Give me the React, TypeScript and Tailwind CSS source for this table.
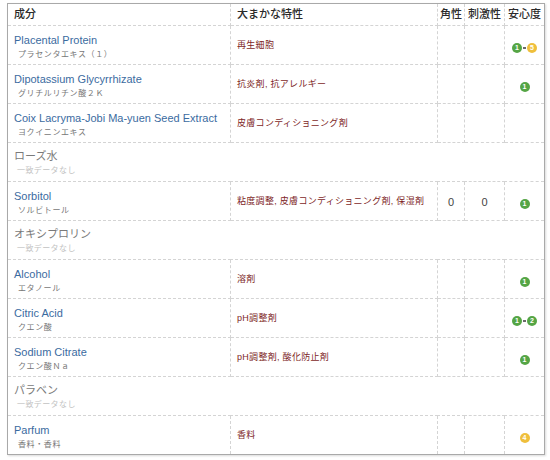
import React from "react";

type Badge = { lo: number; hi?: number };
type Row =
  | { kind: "data"; name: string; sub: string; props: string; k?: string; s?: string; badge?: Badge }
  | { kind: "none"; name: string };

const rows: Row[] = [
  { kind: "data", name: "Placental Protein", sub: "プラセンタエキス（１）", props: "再生細胞", badge: { lo: 1, hi: 5 } },
  { kind: "data", name: "Dipotassium Glycyrrhizate", sub: "グリチルリチン酸２Ｋ", props: "抗炎剤, 抗アレルギー", badge: { lo: 1 } },
  { kind: "data", name: "Coix Lacryma-Jobi Ma-yuen Seed Extract", sub: "ヨクイニンエキス", props: "皮膚コンディショニング剤" },
  { kind: "none", name: "ローズ水" },
  { kind: "data", name: "Sorbitol", sub: "ソルビトール", props: "粘度調整, 皮膚コンディショニング剤, 保湿剤", k: "0", s: "0", badge: { lo: 1 } },
  { kind: "none", name: "オキシプロリン" },
  { kind: "data", name: "Alcohol", sub: "エタノール", props: "溶剤", badge: { lo: 1 } },
  { kind: "data", name: "Citric Acid", sub: "クエン酸", props: "pH調整剤", badge: { lo: 1, hi: 2 } },
  { kind: "data", name: "Sodium Citrate", sub: "クエン酸Ｎａ", props: "pH調整剤, 酸化防止剤", badge: { lo: 1 } },
  { kind: "none", name: "パラベン" },
  { kind: "data", name: "Parfum", sub: "香料・香料", props: "香料", badge: { lo: 4 } },
];

const font = { fontFamily: '"Liberation Sans", Arial, "Noto Sans CJK JP", sans-serif' };

function Dot({ n }: { n: number }) {
  const yellow = n >= 4;
  return (
    <span
      className={
        "inline-flex h-[10px] w-[10px] items-center justify-center rounded-full text-[7px] font-bold leading-none text-white " +
        (yellow ? "bg-[#efbf3c]" : "bg-[#55a545]")
      }
    >
      {n}
    </span>
  );
}

function BadgeView({ b }: { b: Badge }) {
  return (
    <span className="inline-flex items-center">
      <Dot n={b.lo} />
      {b.hi !== undefined && (
        <>
          <span className="mx-[1px] h-[2px] w-[3px] bg-[#6a6a6a]" />
          <Dot n={b.hi} />
        </>
      )}
    </span>
  );
}

const cell = "border border-dashed border-[#d4d4d4]";

export default function App() {
  return (
    <div className="min-h-[460px] w-[550px] bg-white pl-[7px] pt-[3px]" style={font}>
      <table className="w-[537px] table-fixed border-collapse border border-solid border-[#a9a9a9] shadow-[1px_1px_2px_rgba(0,0,0,0.15)]">
        <colgroup>
          <col className="w-[223px]" />
          <col className="w-[207px]" />
          <col className="w-[27px]" />
          <col className="w-[40px]" />
          <col className="w-[40px]" />
        </colgroup>
        <thead>
          <tr className="h-[22px] text-[11px] text-[#2a2a2a]">
            <th className={cell + " border-t-0 border-l-0 px-[6px] text-left font-medium"}>成分</th>
            <th className={cell + " border-t-0 px-[6px] text-left font-medium"}>大まかな特性</th>
            <th className={cell + " border-t-0 px-0 text-center font-medium"}>角性</th>
            <th className={cell + " border-t-0 px-0 text-center font-medium"}>刺激性</th>
            <th className={cell + " border-t-0 border-r-0 px-0 text-center font-medium"}>安心度</th>
          </tr>
        </thead>
        <tbody>
          {rows.map((r, i) =>
            r.kind === "none" ? (
              <tr key={i} className="h-[39px]">
                <td colSpan={5} className={cell + " border-l-0 border-r-0 px-[6px] align-top"}>
                  <div className="pt-[5px] text-[11px] leading-[16px] text-[#7a7a7a]">{r.name}</div>
                  <div className="pl-[3px] text-[8px] leading-[13px] tracking-[0.4px] text-[#c2c2c2]">一致データなし</div>
                </td>
              </tr>
            ) : (
              <tr key={i} className="h-[39px]">
                <td className={cell + " border-l-0 px-[6px] align-top"}>
                  <div className="whitespace-nowrap pt-[6px] text-[11px] leading-[16px] text-[#3b6b9f]">{r.name}</div>
                  <div className="whitespace-nowrap pl-[4px] text-[8px] leading-[13px] tracking-[0.6px] text-[#777]">{r.sub}</div>
                </td>
                <td className={cell + " px-[6px] align-middle text-[9px] tracking-[0.3px] text-[#7e1f1f]"}>
                  <div className="whitespace-nowrap pt-[2px]">{r.props}</div>
                </td>
                <td className={cell + " text-center align-middle text-[11px] text-[#444]"}>
                  <div className="pt-[2px]">{r.k ?? ""}</div>
                </td>
                <td className={cell + " text-center align-middle text-[11px] text-[#444]"}>
                  <div className="pt-[2px]">{r.s ?? ""}</div>
                </td>
                <td className={cell + " border-r-0 text-center align-middle"}>
                  <div className="flex justify-center pt-[5px]">{r.badge && <BadgeView b={r.badge} />}</div>
                </td>
              </tr>
            )
          )}
        </tbody>
      </table>
    </div>
  );
}
